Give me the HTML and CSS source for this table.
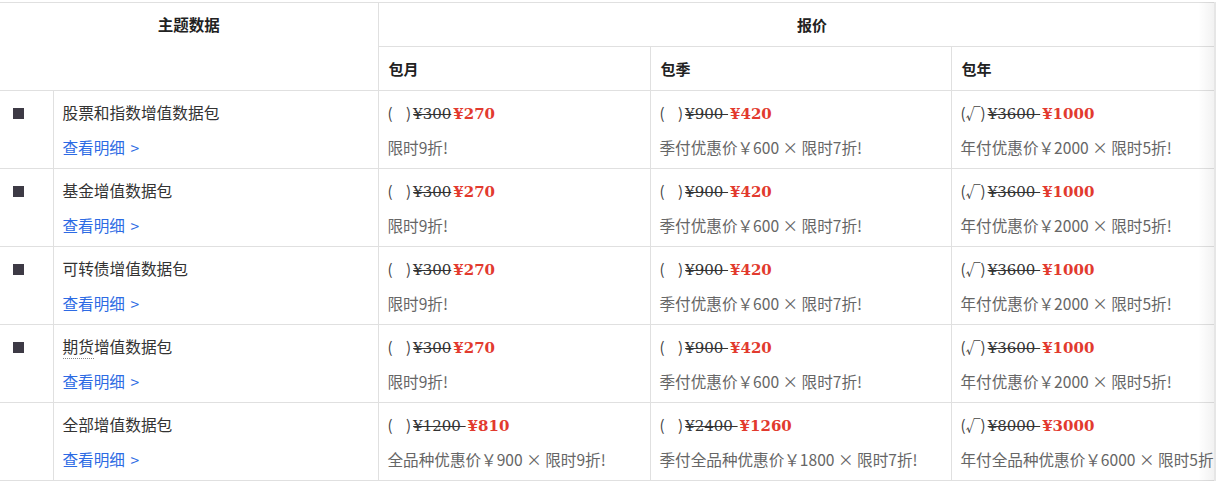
FILE: index.html
```html
<!DOCTYPE html>
<html lang="zh-CN">
<head>
<meta charset="utf-8">
<title>报价</title>
<link rel="stylesheet" href="styles.css">
</head>
<body>
<div class="scroller">
  <table class="price-table">
    <colgroup>
      <col class="c-icon"><col class="c-name"><col class="c-month"><col class="c-quarter"><col class="c-year">
    </colgroup>
    <thead>
      <tr class="head-1">
        <th colspan="2" rowspan="2" class="th-center th-topic"><span class="topic-label">主题数据</span></th>
        <th colspan="3" class="th-center">报价</th>
      </tr>
      <tr class="head-2">
        <th>包月</th>
        <th>包季</th>
        <th>包年</th>
      </tr>
    </thead>
    <tbody>
      <tr>
        <td class="icon-cell"><span class="square"></span></td>
        <td><div class="line1">股票和指数增值数据包</div><div class="line2"><a class="more">查看明细 <span class="arrow">&gt;</span></a></div></td>
        <td><div class="line1"><span class="chk">(&nbsp;&nbsp;&nbsp;&nbsp;)</span><del>¥300</del><strong>¥270</strong></div><div class="line2 note">限时9折!</div></td>
        <td><div class="line1"><span class="chk">(&nbsp;&nbsp;&nbsp;&nbsp;)</span><del>¥900 </del><strong>¥420</strong></div><div class="line2 note">季付优惠价￥600 × 限时7折!</div></td>
        <td><div class="line1"><span class="chk">(√)</span><del>¥3600 </del><strong>¥1000</strong></div><div class="line2 note">年付优惠价￥2000 × 限时5折!</div></td>
      </tr>
      <tr>
        <td class="icon-cell"><span class="square"></span></td>
        <td><div class="line1">基金增值数据包</div><div class="line2"><a class="more">查看明细 <span class="arrow">&gt;</span></a></div></td>
        <td><div class="line1"><span class="chk">(&nbsp;&nbsp;&nbsp;&nbsp;)</span><del>¥300</del><strong>¥270</strong></div><div class="line2 note">限时9折!</div></td>
        <td><div class="line1"><span class="chk">(&nbsp;&nbsp;&nbsp;&nbsp;)</span><del>¥900 </del><strong>¥420</strong></div><div class="line2 note">季付优惠价￥600 × 限时7折!</div></td>
        <td><div class="line1"><span class="chk">(√)</span><del>¥3600 </del><strong>¥1000</strong></div><div class="line2 note">年付优惠价￥2000 × 限时5折!</div></td>
      </tr>
      <tr>
        <td class="icon-cell"><span class="square"></span></td>
        <td><div class="line1">可转债增值数据包</div><div class="line2"><a class="more">查看明细 <span class="arrow">&gt;</span></a></div></td>
        <td><div class="line1"><span class="chk">(&nbsp;&nbsp;&nbsp;&nbsp;)</span><del>¥300</del><strong>¥270</strong></div><div class="line2 note">限时9折!</div></td>
        <td><div class="line1"><span class="chk">(&nbsp;&nbsp;&nbsp;&nbsp;)</span><del>¥900 </del><strong>¥420</strong></div><div class="line2 note">季付优惠价￥600 × 限时7折!</div></td>
        <td><div class="line1"><span class="chk">(√)</span><del>¥3600 </del><strong>¥1000</strong></div><div class="line2 note">年付优惠价￥2000 × 限时5折!</div></td>
      </tr>
      <tr>
        <td class="icon-cell"><span class="square"></span></td>
        <td><div class="line1"><span class="dotted">期货</span>增值数据包</div><div class="line2"><a class="more">查看明细 <span class="arrow">&gt;</span></a></div></td>
        <td><div class="line1"><span class="chk">(&nbsp;&nbsp;&nbsp;&nbsp;)</span><del>¥300</del><strong>¥270</strong></div><div class="line2 note">限时9折!</div></td>
        <td><div class="line1"><span class="chk">(&nbsp;&nbsp;&nbsp;&nbsp;)</span><del>¥900 </del><strong>¥420</strong></div><div class="line2 note">季付优惠价￥600 × 限时7折!</div></td>
        <td><div class="line1"><span class="chk">(√)</span><del>¥3600 </del><strong>¥1000</strong></div><div class="line2 note">年付优惠价￥2000 × 限时5折!</div></td>
      </tr>
      <tr>
        <td class="icon-cell"></td>
        <td><div class="line1">全部增值数据包</div><div class="line2"><a class="more">查看明细 <span class="arrow">&gt;</span></a></div></td>
        <td><div class="line1"><span class="chk">(&nbsp;&nbsp;&nbsp;&nbsp;)</span><del>¥1200 </del><strong>¥810</strong></div><div class="line2 note">全品种优惠价￥900 × 限时9折!</div></td>
        <td><div class="line1"><span class="chk">(&nbsp;&nbsp;&nbsp;&nbsp;)</span><del>¥2400 </del><strong>¥1260</strong></div><div class="line2 note">季付全品种优惠价￥1800 × 限时7折!</div></td>
        <td><div class="line1"><span class="chk">(√)</span><del>¥8000 </del><strong>¥3000</strong></div><div class="line2 note">年付全品种优惠价￥6000 × 限时5折!</div></td>
      </tr>
    </tbody>
  </table>
  <div class="edge-shadow"></div>
</div>
</body>
</html>
```

FILE: styles.css
```css
html, body {
  margin: 0;
  padding: 0;
  background: #ffffff;
}

body {
  font-family: "Noto Sans CJK SC", "Noto Sans", sans-serif;
  color: #333333;
  padding-top: 2px;
}

.scroller {
  position: relative;
  width: 1216px;
  overflow: hidden;
}

.price-table {
  border-collapse: collapse;
  table-layout: fixed;
  width: 1246px;
  font-size: 14px;
}

.c-icon { width: 53px; }
.c-name { width: 325px; }
.c-month { width: 272px; }
.c-quarter { width: 301px; }
.c-year { width: 295px; }

.price-table th,
.price-table td {
  border: 1px solid #e0e0e0;
  text-align: left;
  vertical-align: top;
}

.price-table tr > :first-child {
  border-left: none;
}

.price-table th {
  height: 43px;
  padding: 0 10px;
  font-weight: bold;
  font-size: 15px;
  color: #222222;
  vertical-align: middle;
}

.price-table .th-center {
  text-align: center;
}

.th-topic {
  vertical-align: top !important;
  padding-top: 10px !important;
}

.topic-label {
  display: block;
  font-size: 15.5px;
  line-height: 22px;
}

.price-table td {
  padding: 10px 10px 9px 9px;
  height: 58px;
}

.line1,
.line2 {
  height: 24px;
  line-height: 24px;
  white-space: nowrap;
}

.line1 {
  font-size: 15.7px;
  color: #333333;
}

.line2 {
  margin-top: 10px;
  font-size: 15.6px;
}

.note {
  color: #666666;
}

.icon-cell {
  padding-left: 13px !important;
}

.square {
  display: block;
  width: 11px;
  height: 11px;
  margin-top: 7px;
  background: #3d3a45;
}

.more {
  color: #2d6be4;
  text-decoration: none;
}

.arrow {
  margin-left: 2px;
}

.dotted {
  border-bottom: 1px dotted #888;
}

.chk {
  color: #444;
  font-size: 15px;
  margin-right: 2px;
  font-family: "Noto Sans CJK SC", sans-serif;
}

del {
  font-family: "DejaVu Serif", serif;
  font-size: 15px;
  color: #333333;
  text-decoration: line-through;
  white-space: pre;
}

strong {
  font-family: "DejaVu Serif", serif;
  font-size: 15px;
  font-weight: bold;
  color: #e23a2e;
  margin-left: 2px;
}

.edge-shadow {
  position: absolute;
  top: 0;
  right: 0;
  bottom: 0;
  width: 16px;
  border-right: 2px solid #e6e6e6;
  background: linear-gradient(to right, rgba(0, 0, 0, 0), rgba(0, 0, 0, 0.05));
  pointer-events: none;
}
```
